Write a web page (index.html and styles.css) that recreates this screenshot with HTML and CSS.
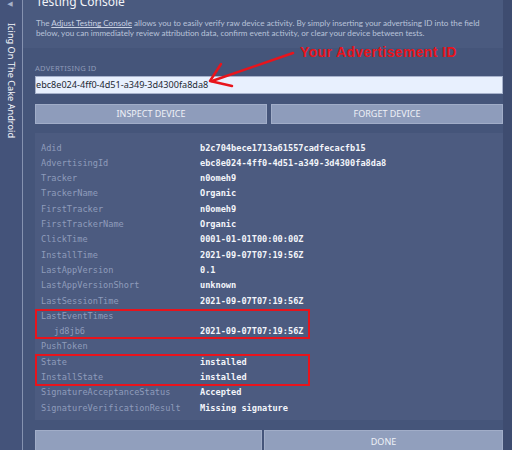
FILE: index.html
```html
<!DOCTYPE html>
<html>
<head>
<meta charset="utf-8">
<link rel="stylesheet" href="styles.css">
</head>
<body>
<div class="app">
  <aside class="sidebar">
    <span class="collapse">&#9664;</span>
    <span class="side-title">Icing On The Cake Android</span>
  </aside>
  <main class="main">
    <header class="header">
      <h1 class="title">Testing Console</h1>
      <p class="desc">The <a class="link">Adjust Testing Console</a> allows you to easily verify raw device activity. By simply inserting your advertising ID into the field<br>below, you can immediately review attribution data, confirm event activity, or clear your device between tests.</p>
    </header>
    <section class="body">
      <label class="field-label">ADVERTISING ID</label>
      <div class="input">ebc8e024-4ff0-4d51-a349-3d4300fa8da8</div>
      <div class="btn-row">
        <button class="btn">INSPECT DEVICE</button>
        <button class="btn">FORGET DEVICE</button>
      </div>
      <div class="panel">
        <div class="row"><span class="key">Adid</span><span class="val">b2c704bece1713a61557cadfecacfb15</span></div>
        <div class="row"><span class="key">AdvertisingId</span><span class="val">ebc8e024-4ff0-4d51-a349-3d4300fa8da8</span></div>
        <div class="row"><span class="key">Tracker</span><span class="val">n0omeh9</span></div>
        <div class="row"><span class="key">TrackerName</span><span class="val">Organic</span></div>
        <div class="row"><span class="key">FirstTracker</span><span class="val">n0omeh9</span></div>
        <div class="row"><span class="key">FirstTrackerName</span><span class="val">Organic</span></div>
        <div class="row"><span class="key">ClickTime</span><span class="val">0001-01-01T00:00:00Z</span></div>
        <div class="row"><span class="key">InstallTime</span><span class="val">2021-09-07T07:19:56Z</span></div>
        <div class="row"><span class="key">LastAppVersion</span><span class="val">0.1</span></div>
        <div class="row"><span class="key">LastAppVersionShort</span><span class="val">unknown</span></div>
        <div class="row"><span class="key">LastSessionTime</span><span class="val">2021-09-07T07:19:56Z</span></div>
        <div class="row"><span class="key">LastEventTimes</span><span class="val"></span></div>
        <div class="row"><span class="key sub">jd8jb6</span><span class="val">2021-09-07T07:19:56Z</span></div>
        <div class="row"><span class="key">PushToken</span><span class="val"></span></div>
        <div class="row"><span class="key">State</span><span class="val">installed</span></div>
        <div class="row"><span class="key">InstallState</span><span class="val">installed</span></div>
        <div class="row"><span class="key">SignatureAcceptanceStatus</span><span class="val">Accepted</span></div>
        <div class="row"><span class="key">SignatureVerificationResult</span><span class="val">Missing signature</span></div>
        <div class="mark mark-events"></div>
        <div class="mark mark-state"></div>
      </div>
      <div class="btn-row bottom">
        <button class="btn wide-left"></button>
        <button class="btn wide-right">DONE</button>
      </div>
    </section>
  </main>
  <div class="scrollbar"></div>
  <div class="annotation">
    <svg width="512" height="100" viewBox="0 0 512 100">
      <line x1="293" y1="53" x2="212" y2="81" stroke="#e8141c" stroke-width="2.5" stroke-linecap="round"/>
      <polyline points="221,64 210,81 232,86" fill="none" stroke="#e8141c" stroke-width="2.5" stroke-linecap="round" stroke-linejoin="round"/>
    </svg>
    <span class="anno-text">Your Advertisement ID</span>
  </div>
</div>
</body>
</html>
```

FILE: styles.css
```css
* { box-sizing: border-box; }
html, body { margin: 0; padding: 0; }
body {
  width: 512px;
  height: 450px;
  overflow: hidden;
  background: #45557a;
  font-family: "Noto Sans", "DejaVu Sans", sans-serif;
}
.app {
  position: relative;
  display: flex;
  width: 512px;
  height: 450px;
}
.sidebar {
  width: 23px;
  flex: none;
  background: #44537a;
  border-right: 1px solid #8592b0;
  display: flex;
  flex-direction: column;
  align-items: center;
}
.collapse {
  font-size: 7px;
  color: #a6b0c8;
  line-height: 8px;
  margin-left: -2px;
}
.side-title {
  writing-mode: vertical-rl;
  color: #f4f6fa;
  font-size: 9.2px;
  line-height: 12px;
  margin-top: 15px;
  white-space: nowrap;
}
.main {
  flex: 1;
  display: flex;
  flex-direction: column;
  min-width: 0;
}
.header {
  display: flow-root;
  height: 48px;
  flex: none;
  background: #4a5a7f;
  padding: 0 0 0 13px;
}
.title {
  margin: -6px 0 0;
  font-size: 12px;
  line-height: 16px;
  font-weight: normal;
  color: #f2f4f8;
}
.desc {
  margin: 8px 0 0;
  font-family: Lato, "Noto Sans", sans-serif;
  font-size: 8.1px;
  line-height: 10px;
  color: #b9c3d9;
  white-space: nowrap;
}
.link {
  color: #c9d1e3;
  text-decoration: underline;
}
.body {
  flex: 1;
  padding: 15px 0 0 12px;
  display: flex;
  flex-direction: column;
}
.field-label {
  display: block;
  font-size: 7.6px;
  line-height: 10px;
  color: #8f9bb8;
  letter-spacing: 0.2px;
}
.input {
  margin-top: 3px;
  height: 18px;
  flex: none;
  background: #e8f0fe;
  border: 1px solid #a7b2cc;
  font-size: 9.1px;
  line-height: 16px;
  color: #222833;
}
.btn-row {
  display: flex;
  flex: none;
  gap: 4px;
  margin-top: 10px;
}
.btn {
  flex: 1;
  height: 20px;
  background: #8e9cbb;
  border: 1px solid #a1adc8;
  color: #eef1f7;
  font-family: "Noto Sans", "DejaVu Sans", sans-serif;
  font-size: 9px;
  padding: 0;
  line-height: 18px;
}
.panel {
  position: relative;
  flex: none;
  margin-top: 9px;
  background: #4c5b80;
  padding: 7.6px 0 4.4px;
}
.row {
  display: flex;
  height: 15.3px;
  line-height: 15.3px;
  font-family: "DejaVu Sans Mono", monospace;
  font-size: 8.6px;
}
.key {
  width: 165px;
  padding-left: 6px;
  color: #8f9bbb;
}
.key.sub { padding-left: 19px; }
.val { color: #f3f5fa; font-weight: bold; }
.mark {
  position: absolute;
  left: 0;
  width: 275px;
  border: 2px solid #e8141c;
}
.mark-events { top: 176px; height: 30px; }
.mark-state { top: 221px; height: 32px; }
.bottom {
  margin-top: 10px;
  gap: 2px;
}
.bottom .btn { height: 24px; background: #919fbd; }
.wide-left { flex: 226; }
.wide-right { flex: 238; }
.scrollbar {
  width: 9px;
  flex: none;
  background: #3e4c70;
}
.annotation {
  position: absolute;
  left: 0;
  top: 0;
  width: 512px;
  height: 100px;
  pointer-events: none;
}
.annotation svg { position: absolute; left: 0; top: 0; }
.anno-text {
  position: absolute;
  left: 300px;
  top: 44px;
  font-family: "Liberation Sans", Arial, sans-serif;
  font-weight: bold;
  font-size: 14px;
  letter-spacing: 0.35px;
  line-height: 16px;
  color: #e8141c;
  white-space: nowrap;
}
```
